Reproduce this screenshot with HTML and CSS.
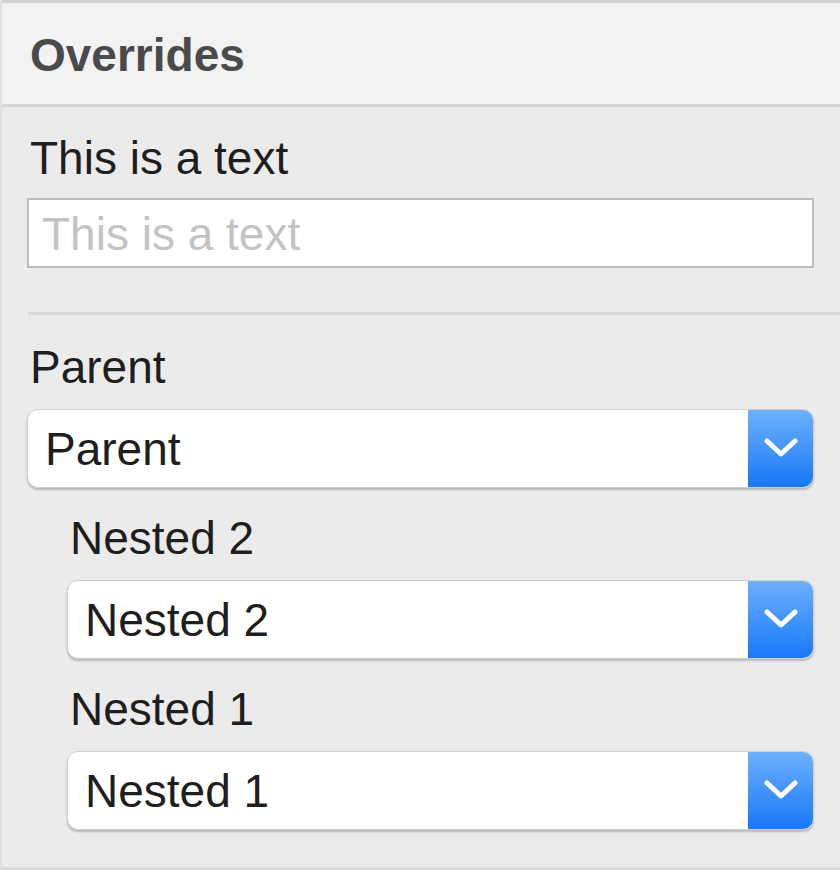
FILE: index.html
```html
<!DOCTYPE html>
<html>
<head>
<meta charset="utf-8">
<link rel="stylesheet" href="styles.css">
</head>
<body>
<div class="panel">
  <div class="header"><span class="title">Overrides</span></div>
  <div class="content">
    <div class="field">
      <div class="label">This is a text</div>
      <div class="input"><span class="placeholder">This is a text</span></div>
    </div>
    <div class="divider"></div>
    <div class="field field-select">
      <div class="label">Parent</div>
      <div class="select">
        <span class="value">Parent</span>
        <span class="arrow"><svg width="34" height="20" viewBox="0 0 34 20"><polyline points="3,3 17,16 31,3" fill="none" stroke="#fff" stroke-width="5" stroke-linecap="round" stroke-linejoin="round"/></svg></span>
      </div>
    </div>
    <div class="nested">
      <div class="field field-select">
        <div class="label">Nested 2</div>
        <div class="select">
          <span class="value">Nested 2</span>
          <span class="arrow"><svg width="34" height="20" viewBox="0 0 34 20"><polyline points="3,3 17,16 31,3" fill="none" stroke="#fff" stroke-width="5" stroke-linecap="round" stroke-linejoin="round"/></svg></span>
        </div>
      </div>
      <div class="field field-select">
        <div class="label">Nested 1</div>
        <div class="select">
          <span class="value">Nested 1</span>
          <span class="arrow"><svg width="34" height="20" viewBox="0 0 34 20"><polyline points="3,3 17,16 31,3" fill="none" stroke="#fff" stroke-width="5" stroke-linecap="round" stroke-linejoin="round"/></svg></span>
        </div>
      </div>
    </div>
  </div>
</div>
</body>
</html>
```
FILE: styles.css
```css
* { box-sizing: border-box; }
html, body { margin: 0; padding: 0; }
body {
  background: #ebebeb;
  font-family: "Liberation Sans", Arial, sans-serif;
  width: 840px;
  height: 870px;
  overflow: hidden;
}
.panel {
  height: 870px;
  border-left: 2px solid #e0e0e0;
  border-bottom: 3px solid #dadada;
  display: flex;
  flex-direction: column;
}
.header {
  height: 107px;
  background: #f2f2f2;
  border-top: 3px solid #d3d3d3;
  border-bottom: 3px solid #d5d5d5;
  padding: 0 0 0 28px;
  display: flex;
  align-items: flex-start;
}
.title {
  font-weight: bold;
  font-size: 46px;
  line-height: 54px;
  color: #4a4a4a;
  margin-top: 25px;
}
.content {
  padding: 0 26px 0 25px;
  display: flex;
  flex-direction: column;
}
.field {
  display: flex;
  flex-direction: column;
}
.label {
  font-size: 46px;
  line-height: 54px;
  color: #1e1e1e;
  margin-top: 24px;
  padding-left: 3px;
}
.input {
  margin-top: 13px;
  height: 70px;
  background: #fff;
  border: 2px solid #bdbdbd;
  padding-left: 13px;
  display: flex;
  align-items: center;
}
.placeholder {
  font-size: 46px;
  color: #c3c3c3;
  line-height: 54px;
  margin-top: 2px;
}
.divider {
  margin-top: 44px;
  margin-right: -26px;
  margin-left: 1px;
  height: 3px;
  background: #d9d9d9;
}
.field-select .label { margin-top: 25px; }
.nested .field-select .label { margin-top: 23px; }
.select {
  margin-top: 15px;
  height: 79px;
  background: #fff;
  border-radius: 11px;
  border: 1px solid #cfcfcf;
  box-shadow: 0 2px 2px rgba(0,0,0,0.22);
  display: flex;
  align-items: stretch;
  overflow: hidden;
}
.value {
  flex: 1;
  font-size: 46px;
  color: #1e1e1e;
  line-height: 54px;
  padding-left: 17px;
  display: flex;
  align-items: center;
}
.arrow {
  width: 65px;
  background: linear-gradient(#6db0fd, #1878f7);
  display: flex;
  align-items: center;
  justify-content: center;
}
.arrow svg { display: block; margin-top: -2px; }
.nested {
  padding-left: 40px;
  display: flex;
  flex-direction: column;
}
```
